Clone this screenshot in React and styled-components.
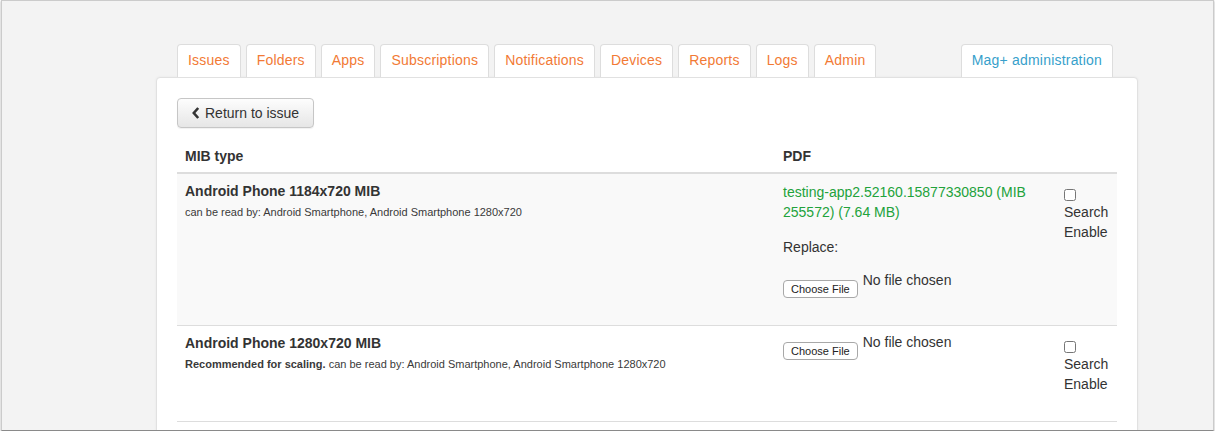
import React from 'react';
import styled, { createGlobalStyle } from 'styled-components';

const GlobalStyle = createGlobalStyle`
  body {
    margin: 0;
    background: #ffffff;
    font-family: "Liberation Sans", Arial, Helvetica, sans-serif;
    color: #333333;
  }
`;

const Frame = styled.div`
  box-sizing: border-box;
  width: 1213px;
  height: 431px;
  margin-left: 1px;
  padding: 43px 0 0 154px;
  border: 1px solid #cbcbcb;
  border-bottom-color: #8a8a8a;
  box-shadow: 0 1px 2px rgba(0, 0, 0, 0.35);
  background: #f3f3f3;
  overflow: hidden;
`;

const Wrapper = styled.div`
  width: 982px;
`;

const TabBar = styled.nav`
  display: flex;
  padding: 0 25px 0 21px;
`;

const Tab = styled.a`
  display: block;
  margin-right: ${({ $push }) => ($push ? '0' : '5px')};
  margin-left: ${({ $push }) => ($push ? 'auto' : '0')};
  padding: 5px 10px 7px;
  border: 1px solid #dddddd;
  border-bottom: 0;
  border-radius: 4px 4px 0 0;
  background: #ffffff;
  color: ${({ $blue }) => ($blue ? '#379fcb' : '#f27a35')};
  font-size: 14px;
  line-height: 20px;
  letter-spacing: 0.2px;
  text-decoration: none;
`;

const Panel = styled.section`
  min-height: 400px;
  padding: 20px;
  border: 1px solid #e1e1e1;
  border-radius: 4px 4px 0 0;
  background: #ffffff;
  box-shadow: 0 0 3px rgba(0, 0, 0, 0.05);
`;

const BackButton = styled.button`
  display: flex;
  align-items: center;
  gap: 5px;
  height: 30px;
  padding: 0 14px;
  border: 1px solid #c6c6c6;
  border-radius: 4px;
  background: linear-gradient(#fdfdfd, #e6e6e6);
  box-shadow: 0 1px 1px rgba(0, 0, 0, 0.06);
  color: #333333;
  font-family: inherit;
  font-size: 14px;
`;

const Table = styled.div`
  margin-top: 10px;
  width: 940px;
`;

const Row = styled.div`
  display: grid;
  grid-template-columns: 598px 281px 1fr;
  border-bottom: ${({ $head }) => ($head ? '2px' : '1px')} solid #dddddd;
  background: ${({ $striped }) => ($striped ? '#f9f9f9' : '#ffffff')};
`;

const HeadCell = styled.div`
  padding: 8px 8px 6px;
  font-size: 14px;
  font-weight: bold;
  line-height: 20px;
`;

const Cell = styled.div`
  padding: ${({ $narrow }) => ($narrow ? '8px 0 27px 8px' : '8px 8px 27px')};
  font-size: 14px;
  line-height: 20px;
`;

const Title = styled.div`
  font-weight: bold;
  line-height: 18px;
`;

const Note = styled.div`
  margin-top: 5px;
  font-size: 11px;
  line-height: 15px;
  color: #3a3a3a;
`;

const FileLink = styled.a`
  display: block;
  color: #22a23b;
  text-decoration: none;
`;

const Label = styled.div`
  margin-top: 15px;
`;

const FileRow = styled.div`
  display: flex;
  align-items: flex-start;
  margin-top: ${({ $first }) => ($first ? '-2px' : '13px')};
`;

const ChooseButton = styled.span`
  box-sizing: border-box;
  display: block;
  height: 18px;
  margin-top: 10px;
  padding: 0 7px;
  border: 1px solid #a8a8a8;
  border-radius: 4px;
  background: #ffffff;
  font-size: 11px;
  line-height: 16px;
  color: #222222;
`;

const NoFile = styled.span`
  margin-left: 5px;
`;

const Check = styled.input`
  display: block;
  width: 12px;
  height: 12px;
  margin: 7px 0 1px 0;
`;

const Chevron = () => (
  <svg width="8" height="12" viewBox="0 0 8 12">
    <polyline points="6.2,1 1.8,6 6.2,11" fill="none" stroke="#333" strokeWidth="2.6" />
  </svg>
);

const tabs = ['Issues', 'Folders', 'Apps', 'Subscriptions', 'Notifications', 'Devices', 'Reports', 'Logs', 'Admin'];

const FileInput = ({ first }) => (
  <FileRow $first={first}>
    <ChooseButton>Choose File</ChooseButton>
    <NoFile>No file chosen</NoFile>
  </FileRow>
);

const SearchToggle = () => (
  <Cell $narrow>
    <Check type="checkbox" />
    Search Enable
  </Cell>
);

const App = () => (
  <>
    <GlobalStyle />
    <Frame>
      <Wrapper>
        <TabBar>
          {tabs.map((t) => (
            <Tab key={t} href="#">{t}</Tab>
          ))}
          <Tab href="#" $push $blue>Mag+ administration</Tab>
        </TabBar>
        <Panel>
          <BackButton>
            <Chevron />
            Return to issue
          </BackButton>
          <Table>
            <Row $head>
              <HeadCell>MIB type</HeadCell>
              <HeadCell>PDF</HeadCell>
              <HeadCell />
            </Row>
            <Row $striped>
              <Cell>
                <Title>Android Phone 1184x720 MIB</Title>
                <Note>can be read by: Android Smartphone, Android Smartphone 1280x720</Note>
              </Cell>
              <Cell>
                <FileLink href="#">testing-app2.52160.15877330850 (MIB 255572) (7.64 MB)</FileLink>
                <Label>Replace:</Label>
                <FileInput />
              </Cell>
              <SearchToggle />
            </Row>
            <Row>
              <Cell>
                <Title>Android Phone 1280x720 MIB</Title>
                <Note>
                  <b>Recommended for scaling.</b> can be read by: Android Smartphone, Android Smartphone 1280x720
                </Note>
              </Cell>
              <Cell>
                <FileInput first />
              </Cell>
              <SearchToggle />
            </Row>
          </Table>
        </Panel>
      </Wrapper>
    </Frame>
  </>
);

export default App;
